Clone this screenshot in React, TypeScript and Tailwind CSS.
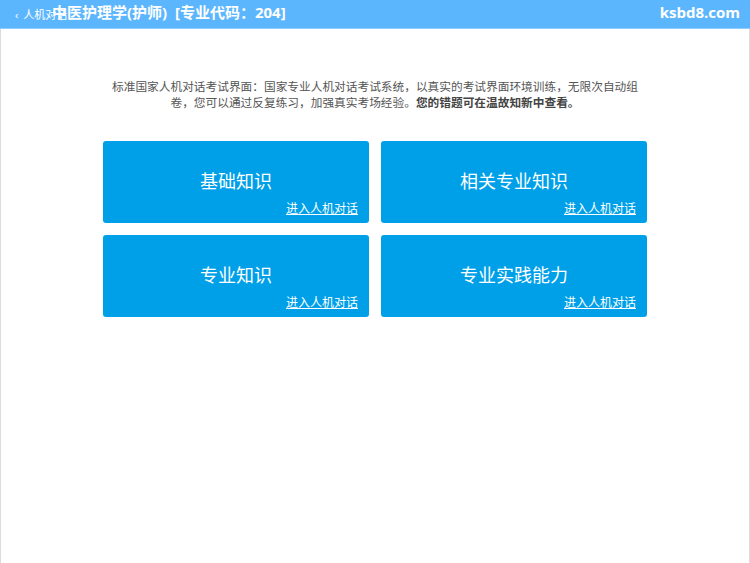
const subjects = ['基础知识', '相关专业知识', '专业知识', '专业实践能力'];

const App = () => {
  return (
    <div
      className="min-h-[563px] w-[750px] bg-white border-x border-[#dcdcdc] flex flex-col"
      style={{ fontFamily: '"Open Sans", "Noto Sans CJK SC", sans-serif' }}
    >
      {/* Header */}
      <header className="relative h-[29px] bg-[#5cb6fd] border-b border-[#8fcdfd] flex items-center pb-[4px] -mx-px">
        <div className="absolute left-[15px] top-[9px] flex items-center gap-[5px] text-[11px] text-white">
          <span className="text-[11px] leading-none">‹</span>
          <span className="leading-none">人机对话</span>
        </div>
        <h1 className="relative ml-[52px] text-[15px] font-bold text-white leading-none whitespace-pre">
          中医护理学(护师)  [专业代码：204]
        </h1>
        <div className="ml-auto mr-[10px] text-[15px] font-bold text-white leading-none">ksbd8.com</div>
      </header>

      {/* Intro */}
      <p className="mx-auto mt-[49px] w-[532px] text-center text-[11.7px] leading-[16px] text-[#555]">
        标准国家人机对话考试界面：国家专业人机对话考试系统，以真实的考试界面环境训练，无限次自动组卷，您可以通过反复练习，加强真实考场经验。
        <b className="text-[#444]">您的错题可在温故知新中查看。</b>
      </p>

      {/* Subject cards */}
      <div className="mx-auto mt-[31px] grid grid-cols-2 gap-x-[12px] gap-y-[12px] w-[544px]">
        {subjects.map((s) => (
          <div key={s} className="h-[82px] rounded-[3px] bg-[#00a0e9] flex flex-col text-white">
            <div className="h-[50px] flex items-end justify-center pb-[1px] text-[18px] leading-none">{s}</div>
            <div className="flex-1 flex items-start justify-end pr-[11px] pt-[12px]">
              <a className="text-[12px] underline leading-none cursor-pointer">进入人机对话</a>
            </div>
          </div>
        ))}
      </div>
    </div>
  );
};

export default App;
